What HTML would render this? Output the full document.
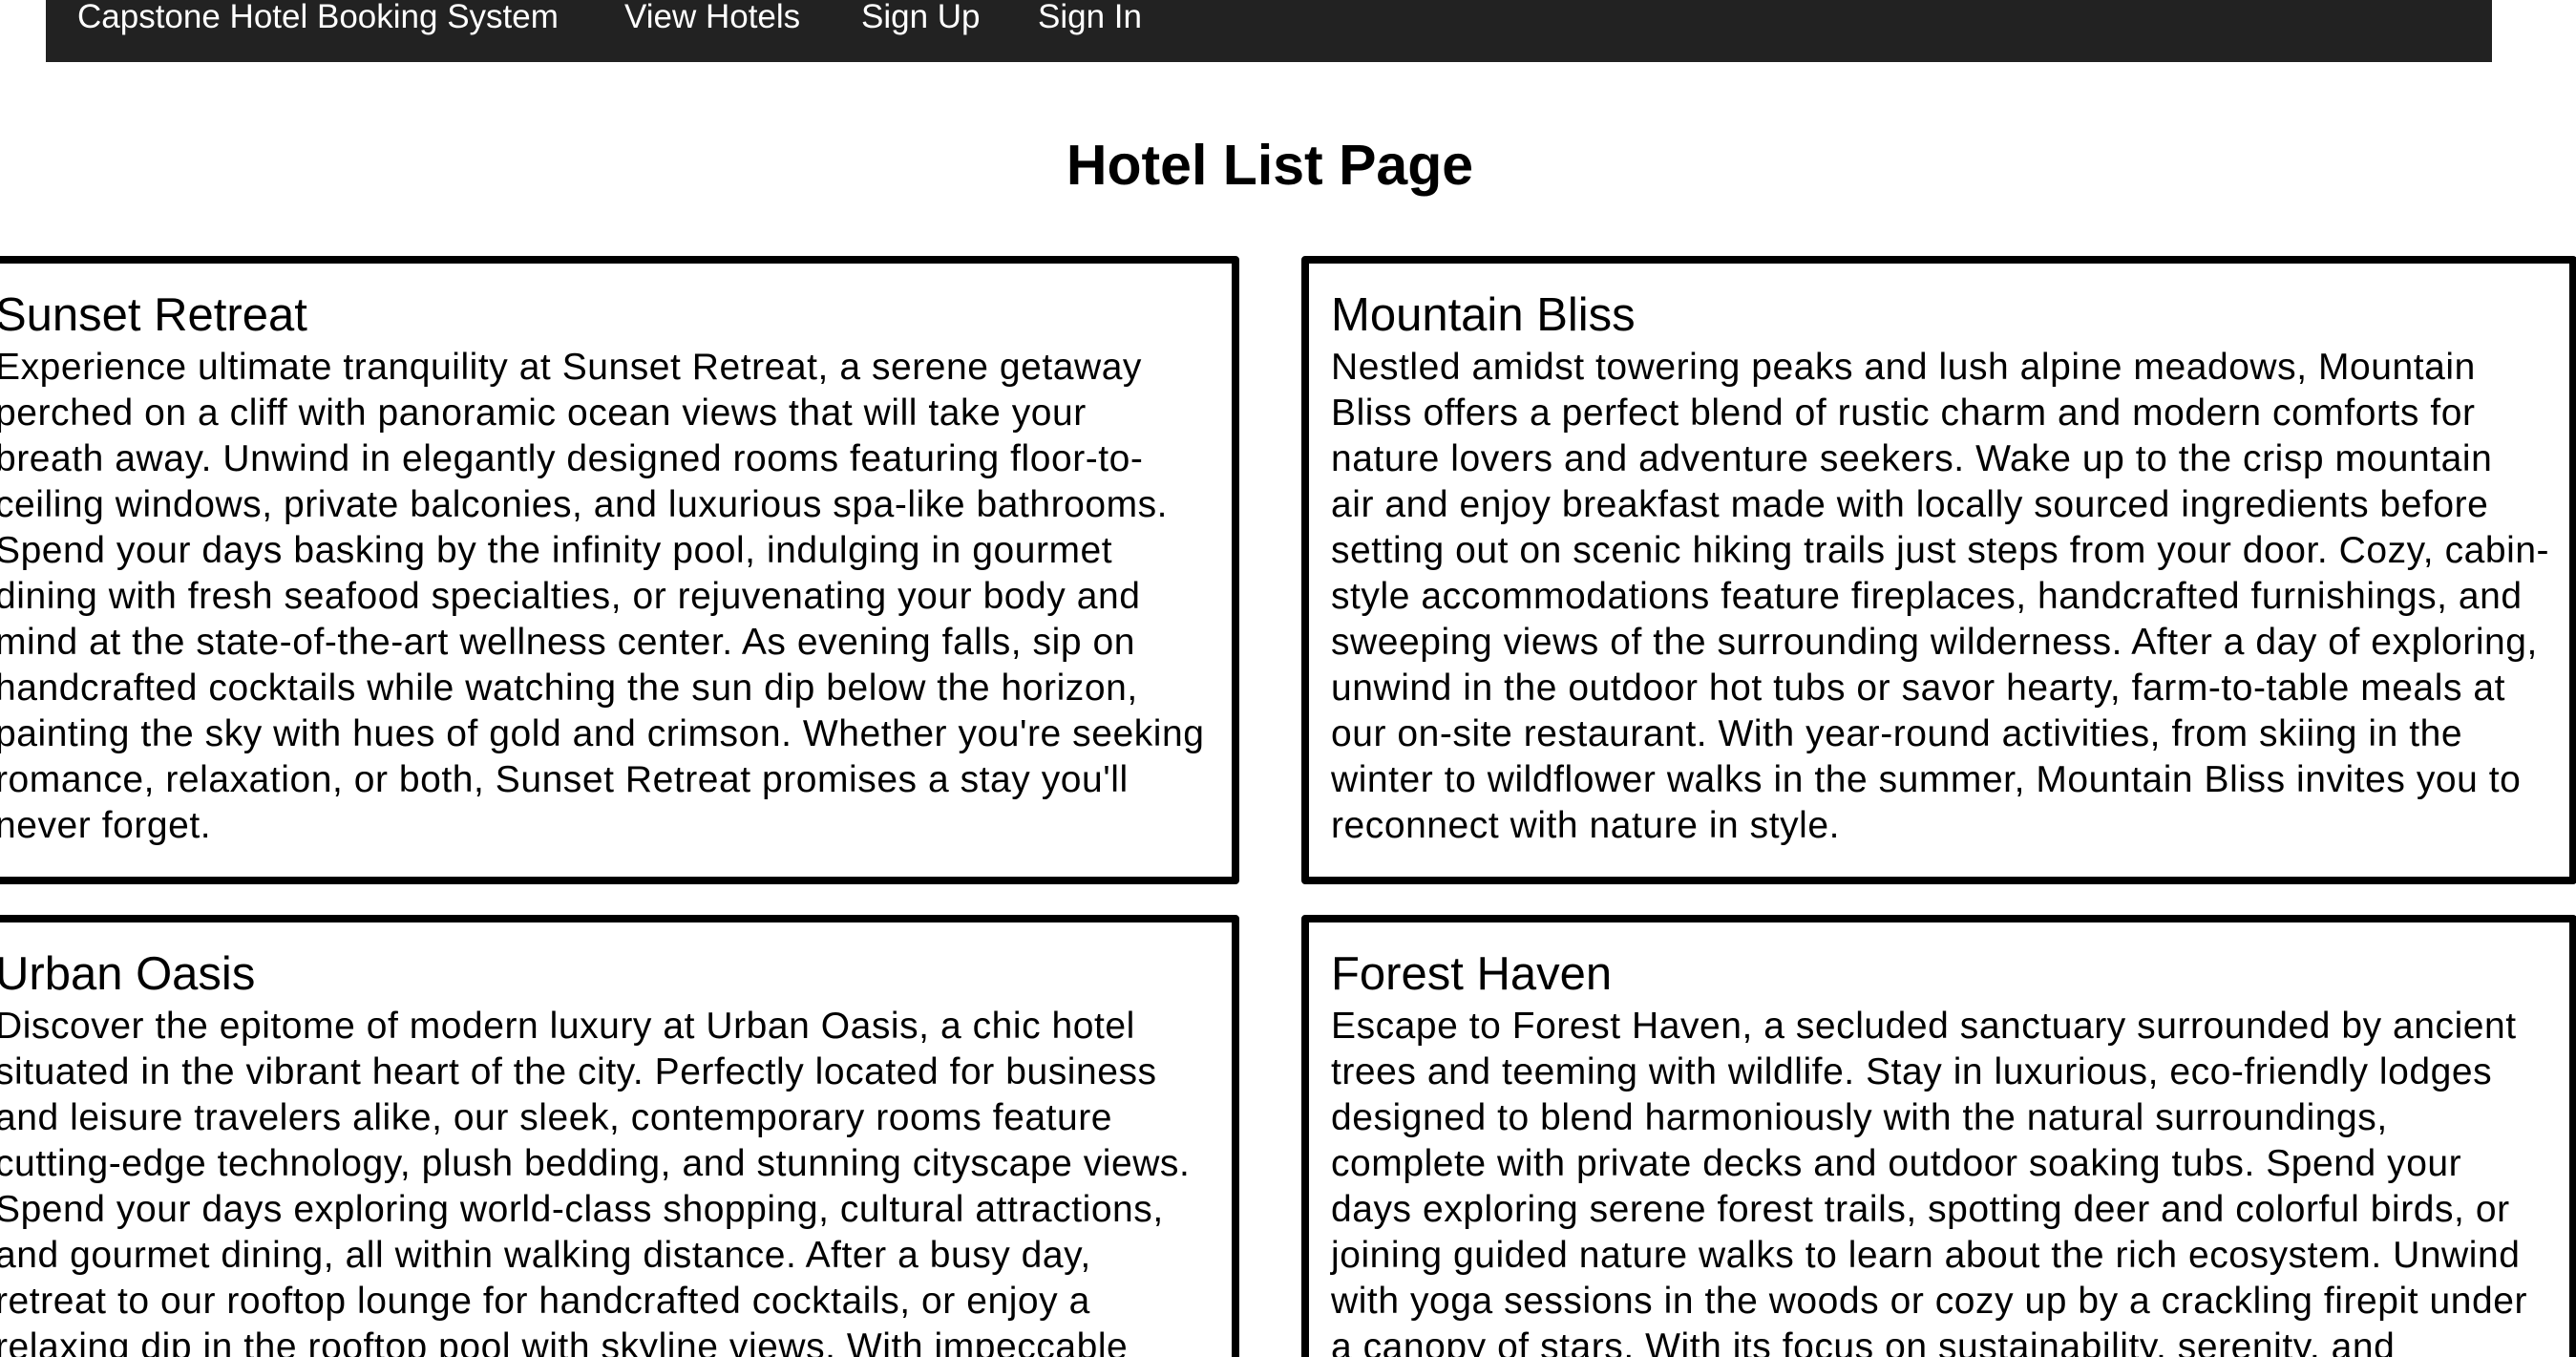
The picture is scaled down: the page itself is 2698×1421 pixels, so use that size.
<!DOCTYPE html>
<html style="width:2698px;height:1421px;overflow:hidden"><head><meta charset="utf-8"><style>
body{margin:0;width:2698px;height:1421px;overflow:hidden;background:#fff;font-family:"Liberation Sans",sans-serif;color:#000;position:relative}
.nav{position:absolute;left:48px;top:0;width:2562px;height:65px;background:#222}
.nav span{position:absolute;top:0;color:#fff;font-size:35px;line-height:36px;white-space:nowrap}
h1{position:absolute;left:0;width:2660px;text-align:center;top:131px;margin:0;font-size:59px;line-height:84px;font-weight:bold}
.card{position:absolute;width:1320px;height:642px;border:8px solid #000;border-radius:4px;box-sizing:content-box;overflow:hidden}
.card .in{position:absolute;left:23px;top:30px;white-space:nowrap}
.card h2{margin:0 0 7px;font-size:49px;line-height:48px;font-weight:normal}
.card p{margin:0;font-size:39px;line-height:48px;letter-spacing:0.55px}
</style></head><body>
<div class="nav">
<span style="left:33px">Capstone Hotel Booking System</span>
<span style="left:606px">View Hotels</span>
<span style="left:854px">Sign Up</span>
<span style="left:1039px">Sign In</span>
</div>
<h1>Hotel List Page</h1>
<div class="card" style="left:-38px;top:268px"><div class="in" style="left:25px"><h2>Sunset Retreat</h2><p>Experience ultimate tranquility at Sunset Retreat, a serene getaway<br>perched on a cliff with panoramic ocean views that will take your<br>breath away. Unwind in elegantly designed rooms featuring floor-to-<br>ceiling windows, private balconies, and luxurious spa-like bathrooms.<br>Spend your days basking by the infinity pool, indulging in gourmet<br>dining with fresh seafood specialties, or rejuvenating your body and<br>mind at the state-of-the-art wellness center. As evening falls, sip on<br>handcrafted cocktails while watching the sun dip below the horizon,<br>painting the sky with hues of gold and crimson. Whether you're seeking<br>romance, relaxation, or both, Sunset Retreat promises a stay you'll<br>never forget.</p></div></div>
<div class="card" style="left:1363px;top:268px"><div class="in"><h2>Mountain Bliss</h2><p>Nestled amidst towering peaks and lush alpine meadows, Mountain<br>Bliss offers a perfect blend of rustic charm and modern comforts for<br>nature lovers and adventure seekers. Wake up to the crisp mountain<br>air and enjoy breakfast made with locally sourced ingredients before<br>setting out on scenic hiking trails just steps from your door. Cozy, cabin-<br>style accommodations feature fireplaces, handcrafted furnishings, and<br>sweeping views of the surrounding wilderness. After a day of exploring,<br>unwind in the outdoor hot tubs or savor hearty, farm-to-table meals at<br>our on-site restaurant. With year-round activities, from skiing in the<br>winter to wildflower walks in the summer, Mountain Bliss invites you to<br>reconnect with nature in style.</p></div></div>
<div class="card" style="left:-38px;top:958px"><div class="in" style="left:25px"><h2>Urban Oasis</h2><p>Discover the epitome of modern luxury at Urban Oasis, a chic hotel<br>situated in the vibrant heart of the city. Perfectly located for business<br>and leisure travelers alike, our sleek, contemporary rooms feature<br>cutting-edge technology, plush bedding, and stunning cityscape views.<br>Spend your days exploring world-class shopping, cultural attractions,<br>and gourmet dining, all within walking distance. After a busy day,<br>retreat to our rooftop lounge for handcrafted cocktails, or enjoy a<br>relaxing dip in the rooftop pool with skyline views. With impeccable</p></div></div>
<div class="card" style="left:1363px;top:958px"><div class="in"><h2>Forest Haven</h2><p>Escape to Forest Haven, a secluded sanctuary surrounded by ancient<br>trees and teeming with wildlife. Stay in luxurious, eco-friendly lodges<br>designed to blend harmoniously with the natural surroundings,<br>complete with private decks and outdoor soaking tubs. Spend your<br>days exploring serene forest trails, spotting deer and colorful birds, or<br>joining guided nature walks to learn about the rich ecosystem. Unwind<br>with yoga sessions in the woods or cozy up by a crackling firepit under<br>a canopy of stars. With its focus on sustainability, serenity, and</p></div></div>
</body></html>
